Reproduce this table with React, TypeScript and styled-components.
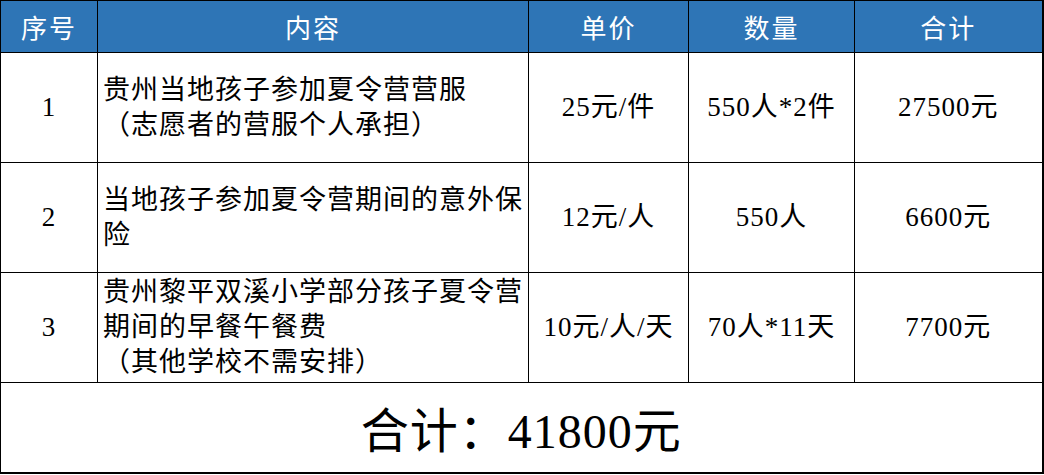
import React from 'react'
import styled, { createGlobalStyle } from 'styled-components'

const GlobalStyle = createGlobalStyle`
  html, body {
    margin: 0;
    padding: 0;
    background: #ffffff;
  }
`

const WrapStyled = styled.div`
  width: 1044px;
  height: 475px;
  background: #ffffff;
`

const TableStyled = styled.table`
  width: 1042px;
  table-layout: fixed;
  border-collapse: collapse;
  border-right: 2px solid #000;
  border-bottom: 2px solid #000;
  font-family: 'Liberation Serif', 'Noto Sans CJK SC', serif;
  color: #000;
`

const HeadCell = styled.th`
  height: 51px;
  padding: 0;
  background: #2e75b6;
  color: #ffffff;
  border: 1px solid #000;
  font-family: 'Noto Sans CJK SC', sans-serif;
  font-weight: 400;
  font-size: 26px;
  letter-spacing: 2px;
  text-align: center;
  vertical-align: middle;
`

const Cell = styled.td<{ $align?: 'left' | 'center' }>`
  height: 109px;
  padding: ${(p) => (p.$align === 'left' ? '0 0 0 5px' : '0')};
  border: 1px solid #000;
  font-size: 27px;
  line-height: 35px;
  letter-spacing: 1px;
  text-align: ${(p) => p.$align ?? 'center'};
  vertical-align: middle;
  white-space: nowrap;
`

const TotalCell = styled.td`
  height: 87px;
  padding: 0 0 2px;
  border: 1px solid #000;
  font-size: 48px;
  letter-spacing: 1px;
  text-align: center;
  vertical-align: middle;
`

const rows = [
  {
    no: '1',
    content: ['贵州当地孩子参加夏令营营服', '（志愿者的营服个人承担）'],
    price: '25元/件',
    qty: '550人*2件',
    sum: '27500元',
  },
  {
    no: '2',
    content: ['当地孩子参加夏令营期间的意外保', '险'],
    price: '12元/人',
    qty: '550人',
    sum: '6600元',
  },
  {
    no: '3',
    content: ['贵州黎平双溪小学部分孩子夏令营', '期间的早餐午餐费', '（其他学校不需安排）'],
    price: '10元/人/天',
    qty: '70人*11天',
    sum: '7700元',
  },
]

const App = () => {
  return (
    <WrapStyled>
      <GlobalStyle />
      <TableStyled>
        <colgroup>
          <col style={{ width: 97 }} />
          <col style={{ width: 431 }} />
          <col style={{ width: 160 }} />
          <col style={{ width: 166 }} />
          <col style={{ width: 188 }} />
        </colgroup>
        <thead>
          <tr>
            <HeadCell>序号</HeadCell>
            <HeadCell>内容</HeadCell>
            <HeadCell>单价</HeadCell>
            <HeadCell>数量</HeadCell>
            <HeadCell>合计</HeadCell>
          </tr>
        </thead>
        <tbody>
          {rows.map((r) => (
            <tr key={r.no}>
              <Cell>{r.no}</Cell>
              <Cell $align='left'>
                {r.content.map((line, i) => (
                  <React.Fragment key={i}>
                    {i > 0 && <br />}
                    {line}
                  </React.Fragment>
                ))}
              </Cell>
              <Cell>{r.price}</Cell>
              <Cell>{r.qty}</Cell>
              <Cell>{r.sum}</Cell>
            </tr>
          ))}
          <tr>
            <TotalCell colSpan={5}>合计：41800元</TotalCell>
          </tr>
        </tbody>
      </TableStyled>
    </WrapStyled>
  )
}

export default App
